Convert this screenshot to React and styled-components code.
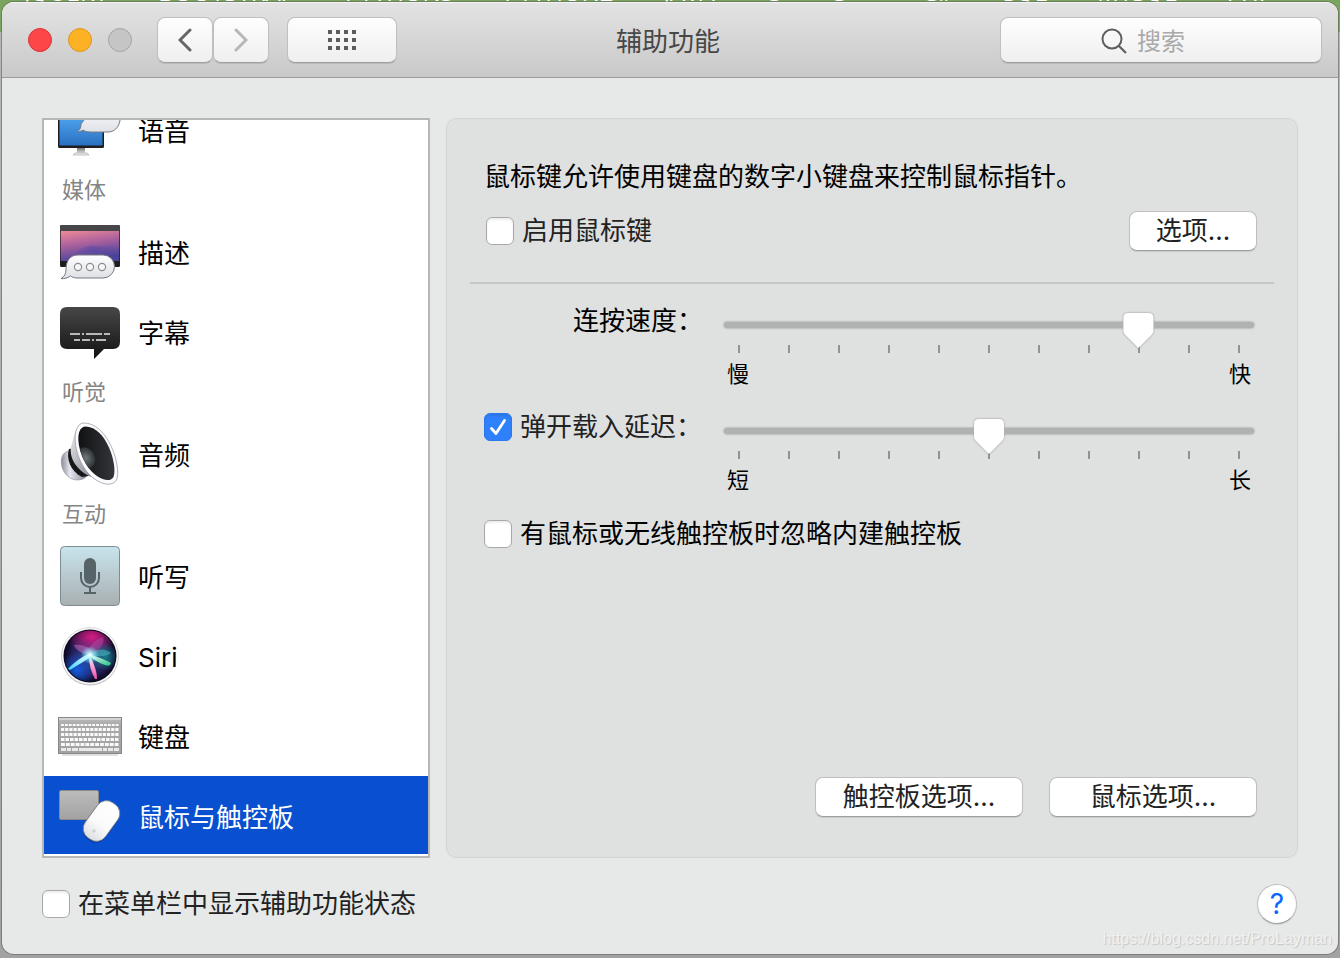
import React, { useState } from "react";
import styled, { createGlobalStyle, css } from "styled-components";

const GlobalStyle = createGlobalStyle`
  *, *::before, *::after { box-sizing: border-box; }
  body {
    margin: 0;
    font-family: Inter, "Noto Sans CJK SC", sans-serif;
    font-size: 26px;
    line-height: 32px;
    color: #000;
  }
  button, input { font: inherit; color: inherit; margin: 0; }
  ul { list-style: none; margin: 0; padding: 0; }
  p, h1, h2 { margin: 0; font: inherit; }
`;

const Desktop = styled.div`
  position: relative;
  min-height: 100vh;
  padding: 2px 2px 4px;
  display: flex;
  background: linear-gradient(#7ba45c 32px, #b5b5b5 32px, #a2a2a2);
`;

const Backdrop = styled.div`
  position: absolute;
  inset: 0 0 auto 0;
  height: 8px;
  overflow: hidden;
  display: flex;
  align-items: flex-end;
  gap: 50px;
  padding: 0 0 0 24px;
  color: #fff;
  font-family: "Open Sans", sans-serif;
  font-size: 24px;
  line-height: 32px;
  white-space: nowrap;
`;

const Window = styled.div`
  position: relative;
  flex: 1;
  min-width: 0;
  display: flex;
  flex-direction: column;
  border-radius: 12px;
  overflow: hidden;
  background: #e7e9e8;
  box-shadow: 0 0 0 1px rgba(90, 90, 90, 0.5);
`;

const TitleBar = styled.header`
  display: grid;
  grid-template-columns: 1fr auto 1fr;
  align-items: center;
  height: 76px;
  padding: 0 16px;
  border-bottom: 1px solid #9b9b9b;
  background: linear-gradient(#e3e3e3, #c9c9c9);
  box-shadow: inset 0 1px #f3f3f3;
`;

const ToolGroup = styled.div`
  display: flex;
  align-items: center;
  gap: 18px;
  padding-left: 10px;
`;

const Lights = styled.div`
  display: flex;
  gap: 16px;
  padding-right: 7px;
`;

const Light = styled.button`
  width: 24px;
  height: 24px;
  padding: 0;
  border-radius: 50%;
  border: 1px solid ${(p) => p.$edge};
  background: ${(p) => p.$fill};
`;

const raised = css`
  border: 1px solid #c0c0c0;
  border-bottom-color: #9f9f9f;
  border-radius: 8px;
  box-shadow: 0 1px 1px rgba(0, 0, 0, 0.1);
`;

const NavPair = styled.div`
  display: flex;
`;

const ToolButton = styled.button`
  ${raised}
  display: flex;
  align-items: center;
  justify-content: center;
  width: ${(p) => (p.$wide ? 110 : 56)}px;
  height: 46px;
  padding: 0;
  background: linear-gradient(#fefefe, #efefef);
`;

const Title = styled.h1`
  padding: 5px 4px 0 0;
  color: #474747;
`;

const SearchBox = styled.label`
  ${raised}
  justify-self: end;
  display: flex;
  align-items: center;
  gap: 10px;
  width: 322px;
  height: 46px;
  padding: 2px 8px 0 100px;
  background: linear-gradient(#fefefe, #efefef);
`;

const SearchInput = styled.input`
  flex: 1;
  min-width: 0;
  padding: 2px 0 0;
  border: 0;
  outline: 0;
  background: none;
  font-size: 24px;
  &::placeholder { color: #a9a9a9; opacity: 1; }
`;

const Content = styled.main`
  flex: 1;
  display: flex;
  gap: 16px;
  padding: 40px 40px 0;
`;

const Sidebar = styled.nav`
  display: flex;
  flex: 0 0 388px;
  border: 2px solid #b6b8b7;
  background: #fff;
`;

const ListScroller = styled.div`
  flex: 1;
  contain: size;
  display: flex;
  flex-direction: column-reverse;
  overflow-y: auto;
  scrollbar-width: none;
`;

const GroupTitle = styled.h2`
  padding: 0 18px;
  font-size: 22px;
  line-height: 40px;
  height: 42px;
  color: #858585;
`;

const ItemButton = styled.button`
  display: flex;
  align-items: center;
  gap: 16px;
  width: 100%;
  height: 80px;
  padding: 2px 14px 0;
  border: 0;
  border-bottom: 2px solid #fff;
  text-align: left;
  background: ${(p) => (p.$selected ? "#0850d0" : "#fff")};
  color: ${(p) => (p.$selected ? "#fff" : "#000")};
  svg { flex: none; overflow: visible; }
`;

const ItemName = styled.span`
  padding-top: 4px;
`;

const Panel = styled.section`
  flex: 1;
  min-width: 0;
  display: flex;
  flex-direction: column;
  padding: 42px 23px 40px;
  border: 1px solid #d2d4d3;
  border-radius: 10px;
  background: #dfe1e0;
`;

const Description = styled.p`
  padding: 0 14px;
`;

const EnableRow = styled.div`
  display: flex;
  align-items: center;
  justify-content: space-between;
  padding: 0 17px 0 16px;
  margin-top: 18px;
`;

const Divider = styled.hr`
  width: 100%;
  height: 2px;
  margin: 31px 0 21px;
  border: 0;
  background: #c6c8c7;
`;

const CheckLabel = styled.label`
  display: flex;
  align-items: center;
  gap: 8px;
  color: ${(p) => (p.$strong ? "#000" : "#222")};
`;

const CheckWrap = styled.span`
  display: grid;
  place-items: center;
  svg, input { grid-area: 1 / 1; }
  svg { pointer-events: none; z-index: 1; }
`;

const CheckInput = styled.input`
  appearance: none;
  width: 28px;
  height: 28px;
  border: 1px solid #a9a9a9;
  border-radius: 6px;
  background: #fff;
  box-shadow: inset 0 2px 2px rgba(0, 0, 0, 0.07);
  &:checked {
    border-color: #2878f0;
    background: #2f80fb;
  }
`;

const SliderGrid = styled.div`
  display: grid;
  grid-template-columns: 219px 1fr;
  gap: 23px 21px;
  align-items: start;
  padding: 0 20px 0 14px;
`;

const SliderLabel = styled.label`
  justify-self: end;
`;

const SliderBlock = styled.div`
  padding-top: 8px;
`;

const Range = styled.input`
  appearance: none;
  display: block;
  position: relative;
  width: 100%;
  height: 24px;
  background: none;
  filter: drop-shadow(0 0 1px rgba(0, 0, 0, 0.35));
  &::-webkit-slider-runnable-track {
    height: 6px;
    border-radius: 3px;
    background: #b0b2b1;
  }
  &::-webkit-slider-thumb {
    appearance: none;
    width: 32px;
    height: 36px;
    margin-top: -9px;
    background: #fff;
    clip-path: path("M6 0H26Q31 0 31 5V18Q31 20 29 22L16 35L3 22Q1 20 1 18V5Q1 0 6 0Z");
  }
`;

const Ticks = styled.div`
  display: flex;
  justify-content: space-between;
  padding: 0 14px;
  margin-top: 8px;
`;

const Tick = styled.span`
  width: 2px;
  height: 8px;
  background: #929493;
`;

const Ends = styled.div`
  display: flex;
  justify-content: space-between;
  padding: 0 3px;
  margin-top: 7px;
  font-size: 22px;
  line-height: 28px;
`;

const IgnoreRow = styled.div`
  display: flex;
  padding: 0 14px;
  margin-top: 24px;
`;

const Actions = styled.div`
  display: flex;
  justify-content: flex-end;
  gap: 26px;
  margin-top: auto;
  padding: 24px 17px 0;
`;

const PushButton = styled.button`
  ${raised}
  width: ${(p) => (p.$wide ? 208 : 128)}px;
  height: 40px;
  padding: 0;
  line-height: 36px;
  background: #fff;
  color: #222;
`;

const Footer = styled.footer`
  display: flex;
  align-items: center;
  justify-content: space-between;
  height: 96px;
  padding: 0 41px 5px 40px;
`;

const HelpButton = styled.button`
  ${raised}
  width: 40px;
  height: 40px;
  padding: 0;
  border-radius: 50%;
  background: #fff;
  color: #0a66ff;
  font-size: 28px;
`;

const Watermark = styled.span`
  position: absolute;
  right: 6px;
  bottom: 5px;
  font: 16px/20px "Liberation Sans", sans-serif;
  color: #f1f1f1;
  text-shadow: 1px 1px 1px #c4c4c4;
`;

const Icon = ({ children }) => (
  <svg width="64" height="64" viewBox="0 0 64 64" aria-hidden="true">{children}</svg>
);

const SpeechIcon = () => (
  <Icon>
    <defs>
      <linearGradient id="spScreen" x2="0" y2="1"><stop stopColor="#56aef5" /><stop offset="1" stopColor="#2a70c2" /></linearGradient>
      <linearGradient id="spBubble" x2="0" y2="1"><stop stopColor="#fff" /><stop offset="1" stopColor="#dfe2e8" /></linearGradient>
      <linearGradient id="spStand" x2="0" y2="1"><stop stopColor="#777" /><stop offset="1" stopColor="#ddd" /></linearGradient>
    </defs>
    <path d="M19 50h8v5h-8z" fill="url(#spStand)" />
    <path d="M17 55h12l2 2H15z" fill="#eee" stroke="#aaa" strokeWidth=".7" />
    <rect y="12" width="46" height="38" rx="1.5" fill="#1e1e1e" />
    <rect x="1.5" y="13" width="43" height="34.5" fill="url(#spScreen)" />
    <path d="M38 6h14c14 0 14 28-2 28H33c-4 0-7-1-8-2-2 1-4 2-6 2 3-2 4-4 4-8z" fill="url(#spBubble)" stroke="#777b82" strokeWidth="1" />
  </Icon>
);

const DescribeIcon = () => (
  <Icon>
    <defs>
      <linearGradient id="dsSky" x1="0" y1="0" x2=".3" y2="1"><stop stopColor="#f08a98" /><stop offset=".45" stopColor="#b0639d" /><stop offset="1" stopColor="#49439b" /></linearGradient>
      <radialGradient id="dsHaze"><stop stopColor="#5547a3" stopOpacity=".7" /><stop offset="1" stopColor="#5547a3" stopOpacity="0" /></radialGradient>
      <linearGradient id="dsBubble" x2="0" y2="1"><stop stopColor="#fff" /><stop offset="1" stopColor="#dcdfe4" /></linearGradient>
    </defs>
    <rect x="2" y="5" width="60" height="42" rx="1.5" fill="#1d1d1f" />
    <rect x="2" y="5" width="60" height="6" rx="1.5" fill="#464648" />
    <rect x="2.7" y="11" width="58.6" height="30" fill="url(#dsSky)" />
    <path d="M12 41Q20 24 38 26T61.3 20V41z" fill="url(#dsHaze)" />
    <path d="M20 35h25a11.500 11.500 0 0 1 0 23H19c-3 0-5-1-6.500-2-3 2-6 3-9.500 2.600 3.500-2 5-4.600 5-9.600 0-8 4-14 12-14z" fill="url(#dsBubble)" stroke="#777a80" strokeWidth="1" />
    {[20, 32, 44].map((x) => <circle key={x} cx={x} cy="47" r="3.600" fill="#f6f6f6" stroke="#8b8f94" strokeWidth="1.200" />)}
  </Icon>
);

const CaptionIcon = () => (
  <Icon>
    <defs>
      <linearGradient id="cpBox" x2="0" y2="1"><stop stopColor="#474747" /><stop offset="1" stopColor="#121212" /></linearGradient>
    </defs>
    <path d="M9 7H55Q62 7 62 14V42Q62 49 55 49H46L36 59V49H9Q2 49 2 42V14Q2 7 9 7Z" fill="url(#cpBox)" />
    <path d="M12 34h10m2 0h2m2 0h16m2 0h6M16 40h6m2 0h8m2 0h2m2 0h10" stroke="#b9b9b9" strokeWidth="2" />
  </Icon>
);

const SpeakerIcon = () => (
  <Icon>
    <defs>
      <linearGradient id="akCone" x1="0" y1="0" x2="1" y2="1"><stop stopColor="#f3f3f8" /><stop offset=".5" stopColor="#a9a9b5" /><stop offset="1" stopColor="#55555f" /></linearGradient>
      <linearGradient id="akBack" x2="1"><stop stopColor="#8c8c98" /><stop offset=".35" stopColor="#e8e8f2" /><stop offset="1" stopColor="#8a8a96" /></linearGradient>
      <radialGradient id="akDome"><stop stopColor="#70777b" /><stop offset="1" stopColor="#2c3033" /></radialGradient>
      <linearGradient id="akIn" x2="1"><stop stopColor="#101113" /><stop offset="1" stopColor="#33363a" /></linearGradient>
      <clipPath id="akClip"><path d="M26 4.500C17 6 19 27 28 42S53 62 56.500 55S52 6 26 4.500z" /></clipPath>
    </defs>
    <path d="M10 29C4 31 2 37 4 45c2 7 8 13 15 13 4 0 7-1 9-3L14 28z" fill="url(#akBack)" stroke="#8f8f99" strokeWidth=".6" />
    <path d="M11 27c-3 9 1 22 13 28l7-1L16 26z" fill="#17171a" />
    <path d="M25 1C15 8 16 16 13 25c-2 11 6 23 18 29l18 7 6-6L29 4z" fill="url(#akCone)" />
    <path d="M25 1C14 3 15 27 25 44S53 67 58.500 58C64 45 50 0 25 1z" fill="#fbfbfd" stroke="#9d9da4" strokeWidth=".8" />
    <path d="M27 4.500C17 6 19 27 28 42S52 62 55.500 55C60 43 48 4 27 4.500z" fill="url(#akIn)" />
    <g clipPath="url(#akClip)"><ellipse cx="28" cy="36" rx="9" ry="11" fill="url(#akDome)" transform="rotate(-27 28 36)" /></g>
  </Icon>
);

const DictationIcon = () => (
  <Icon>
    <defs>
      <linearGradient id="dcBox" x2="0" y2="1"><stop stopColor="#c8e4ec" /><stop offset="1" stopColor="#a9afb1" /></linearGradient>
    </defs>
    <rect x="2.500" y="2.500" width="59" height="59" rx="4" fill="url(#dcBox)" stroke="#7c8c93" />
    <rect x="26" y="14" width="12" height="26" rx="6" fill="#566467" />
    <path d="M23 28v6a9 9 0 0 0 18 0v-6M32 43v6M26 49h12" fill="none" stroke="#566467" strokeWidth="2" />
  </Icon>
);

const SiriIcon = () => (
  <Icon>
    <defs>
      <radialGradient id="srBase"><stop stopColor="#37549c" /><stop offset=".7" stopColor="#221d56" /><stop offset="1" stopColor="#0a0720" /></radialGradient>
      <radialGradient id="srPink"><stop stopColor="#d81b84" /><stop offset="1" stopColor="#d81b84" stopOpacity="0" /></radialGradient>
      <radialGradient id="srBlue"><stop stopColor="#145be0" /><stop offset="1" stopColor="#145be0" stopOpacity="0" /></radialGradient>
      <radialGradient id="srTeal"><stop stopColor="#157b88" /><stop offset="1" stopColor="#157b88" stopOpacity="0" /></radialGradient>
      <radialGradient id="srGlow"><stop stopColor="#fff" /><stop offset=".3" stopColor="#b9fbff" stopOpacity=".8" /><stop offset="1" stopColor="#7ff" stopOpacity="0" /></radialGradient>
      <linearGradient id="srLeft" x1="1" y1="0" x2="0" y2="1"><stop stopColor="#fff" /><stop offset="1" stopColor="#35d5ff" /></linearGradient>
      <linearGradient id="srRight" x2="1" y2="1"><stop stopColor="#fff" /><stop offset="1" stopColor="#22c184" /></linearGradient>
      <linearGradient id="srDown" x2="0" y2="1"><stop stopColor="#fff" /><stop offset="1" stopColor="#f04aa8" /></linearGradient>
      <clipPath id="srClip"><circle cx="32" cy="32" r="25.500" /></clipPath>
    </defs>
    <circle cx="32" cy="33" r="28.500" fill="#000" opacity=".25" />
    <circle cx="32" cy="32" r="28.500" fill="#f7f7f7" stroke="#cfcfcf" strokeWidth=".7" />
    <circle cx="32" cy="32" r="26.500" fill="#0b0820" />
    <g clipPath="url(#srClip)">
      <circle cx="32" cy="32" r="26" fill="url(#srBase)" />
      <ellipse cx="34" cy="13" rx="25" ry="18" fill="url(#srPink)" />
      <circle cx="19" cy="46" r="18" fill="url(#srBlue)" />
      <circle cx="47" cy="33" r="14" fill="url(#srTeal)" />
      <path d="M32 32C24 30 17 25 16 21c9-1 22 4 16 11z" fill="#e084d8" opacity=".4" />
      <path d="M32 31c-4-8 5-15 13-18 3 6-4 14-13 18z" fill="#c455b4" opacity=".4" />
      <path d="M32 31c7-8 16-6 21-2-5 4-13 4-21 2z" fill="#62dcdc" opacity=".4" />
      <path d="M33 29C25 32 16 38 10 45l2 1c8-5 16-10 22-14z" fill="url(#srLeft)" />
      <path d="M31 30c6 2 15 5 22 9-1 3-3 3-6 2-6-2-12-6-16-9z" fill="url(#srRight)" />
      <path d="M31 30c4 8 8 16 8 25l-2 0c-4-7-6-15-6-23z" fill="url(#srDown)" />
      <circle cx="32" cy="31" r="9" fill="url(#srGlow)" />
    </g>
  </Icon>
);

const keyRows = [
  [20, 2, 15], [24, 3, 14], [29, 3, 14], [34, 3, 13], [39, 3, 12],
];

const KeyboardIcon = () => (
  <Icon>
    <defs>
      <linearGradient id="kbBody" x2="0" y2="1"><stop stopColor="#bdbdbd" /><stop offset=".2" stopColor="#a9a9a9" /><stop offset="1" stopColor="#a2a2a2" /></linearGradient>
    </defs>
    <rect x="4" y="49" width="56" height="3" rx="1" fill="#000" opacity=".12" />
    <rect x=".5" y="13.500" width="63" height="36" fill="url(#kbBody)" stroke="#868686" />
    <path d="M1 15h62" stroke="#dedede" strokeWidth="1.500" />
    {keyRows.map(([y, h, n]) =>
      Array.from({ length: n }, (_, i) => (
        <rect key={`${y}-${i}`} x={3 + (i * 58.5) / n} y={y} width={58.5 / n - 1} height={h} fill="#fafafa" />
      ))
    )}
    {[[3, 5], [9, 4], [14, 6], [21, 23], [45, 4], [50, 5], [56, 5]].map(([x, w]) => (
      <rect key={x} x={x} y="44" width={w} height="3" fill="#e9e9e9" />
    ))}
  </Icon>
);

const MouseIcon = () => (
  <Icon>
    <defs>
      <linearGradient id="msPad" x2="0" y2="1"><stop stopColor="#bcbcbc" /><stop offset="1" stopColor="#a2a2a2" /></linearGradient>
      <linearGradient id="msBody" x2="0" y2="1"><stop stopColor="#fff" /><stop offset=".6" stopColor="#fafafa" /><stop offset="1" stopColor="#dcdfe2" /></linearGradient>
    </defs>
    <rect x="1.500" y="6.500" width="39" height="29" rx="1.500" fill="url(#msPad)" stroke="#8a8a8a" />
    <rect x="31" y="17" width="25" height="43" rx="11" transform="rotate(36 43.500 38)" fill="#001a60" opacity=".4" />
    <rect x="31" y="15.500" width="25" height="43" rx="11" transform="rotate(36 43.500 37)" fill="url(#msBody)" stroke="#6f7684" strokeWidth=".8" />
    <circle cx="36" cy="47" r="1.800" fill="#cfd1d3" />
  </Icon>
);

const entries = [
  { name: "语音", Art: SpeechIcon },
  { group: "媒体" },
  { name: "描述", Art: DescribeIcon },
  { name: "字幕", Art: CaptionIcon },
  { group: "听觉" },
  { name: "音频", Art: SpeakerIcon },
  { group: "互动" },
  { name: "听写", Art: DictationIcon },
  { name: "Siri", Art: SiriIcon },
  { name: "键盘", Art: KeyboardIcon },
  { name: "鼠标与触控板", Art: MouseIcon },
];

const backdropWords = ["JQUERY", "BOOTSTRAP", "PYTHON3", "PYTHON2", "JAVA", "C", "C++", "C#", "SQL", "MYSQL", "PHP"];

function Checkbox({ id, defaultChecked = false, strong, children }) {
  const [on, setOn] = useState(defaultChecked);
  return (
    <CheckLabel htmlFor={id} $strong={strong}>
      <CheckWrap>
        <CheckInput id={id} type="checkbox" checked={on} onChange={(e) => setOn(e.target.checked)} />
        {on && (
          <svg width="28" height="28" viewBox="0 0 28 28" aria-hidden="true">
            <path d="M7.500 15.500L12 20.500L20.500 7.500" fill="none" stroke="#fff" strokeWidth="2.800" strokeLinecap="round" strokeLinejoin="round" />
          </svg>
        )}
      </CheckWrap>
      <span>{children}</span>
    </CheckLabel>
  );
}

function Slider({ id, label, value, low, high }) {
  return (
    <SliderBlock>
      <Range id={id} aria-label={label} type="range" min="0" max="10" defaultValue={value} />
      <Ticks>{Array.from({ length: 11 }, (_, i) => <Tick key={i} />)}</Ticks>
      <Ends><span>{low}</span><span>{high}</span></Ends>
    </SliderBlock>
  );
}

export default function App() {
  const [selected, setSelected] = useState("鼠标与触控板");
  return (
    <>
      <GlobalStyle />
      <Desktop>
        <Backdrop aria-hidden="true">
          {backdropWords.map((word) => <span key={word}>{word}</span>)}
        </Backdrop>
        <Window>
          <TitleBar>
            <ToolGroup>
              <Lights>
                <Light aria-label="关闭" $fill="#fc4648" $edge="#dc3436" />
                <Light aria-label="最小化" $fill="#fdb225" $edge="#dc9422" />
                <Light aria-label="缩放" $fill="#c5c5c5" $edge="#a4a4a4" />
              </Lights>
              <NavPair>
                <ToolButton aria-label="后退">
                  <svg width="14" height="24" viewBox="0 0 14 24"><path d="M12 2L2 12L12 22" fill="none" stroke="#666" strokeWidth="3" strokeLinecap="round" /></svg>
                </ToolButton>
                <ToolButton aria-label="前进">
                  <svg width="14" height="24" viewBox="0 0 14 24"><path d="M2 2L12 12L2 22" fill="none" stroke="#b7b7b7" strokeWidth="3" strokeLinecap="round" /></svg>
                </ToolButton>
              </NavPair>
              <ToolButton $wide aria-label="显示全部">
                <svg width="28" height="20" viewBox="0 0 28 20" fill="#5c5c5c">
                  {[0, 8, 16].map((y) => [0, 8, 16, 24].map((x) => <rect key={`${x}-${y}`} x={x} y={y} width="4" height="4" />))}
                </svg>
              </ToolButton>
            </ToolGroup>
            <Title>辅助功能</Title>
            <SearchBox>
              <svg width="26" height="26" viewBox="0 0 26 26" aria-hidden="true"><circle cx="11" cy="11" r="9.500" fill="none" stroke="#5e5e5e" strokeWidth="2" /><path d="M17.500 17.500L25 25" stroke="#5e5e5e" strokeWidth="2.200" /></svg>
              <SearchInput type="search" placeholder="搜索" aria-label="搜索" />
            </SearchBox>
          </TitleBar>
          <Content>
            <Sidebar>
              <ListScroller>
                <ul>
                  {entries.map(({ name, group, Art }) =>
                    group ? (
                      <li key={group}><GroupTitle>{group}</GroupTitle></li>
                    ) : (
                      <li key={name}>
                        <ItemButton $selected={name === selected} onClick={() => setSelected(name)}>
                          <Art />
                          <ItemName>{name}</ItemName>
                        </ItemButton>
                      </li>
                    )
                  )}
                </ul>
              </ListScroller>
            </Sidebar>
            <Panel>
              <Description>鼠标键允许使用键盘的数字小键盘来控制鼠标指针。</Description>
              <EnableRow>
                <Checkbox id="mouse-keys">启用鼠标键</Checkbox>
                <PushButton>选项...</PushButton>
              </EnableRow>
              <Divider />
              <SliderGrid>
                <SliderLabel htmlFor="double-click">连按速度：</SliderLabel>
                <Slider id="double-click" label="连按速度" value={8} low="慢" high="快" />
                <Checkbox id="spring-loading" defaultChecked>弹开载入延迟：</Checkbox>
                <Slider id="spring-delay" label="弹开载入延迟" value={5} low="短" high="长" />
              </SliderGrid>
              <IgnoreRow>
                <Checkbox id="ignore-trackpad" strong>有鼠标或无线触控板时忽略内建触控板</Checkbox>
              </IgnoreRow>
              <Actions>
                <PushButton $wide>触控板选项...</PushButton>
                <PushButton $wide>鼠标选项...</PushButton>
              </Actions>
            </Panel>
          </Content>
          <Footer>
            <Checkbox id="menu-status">在菜单栏中显示辅助功能状态</Checkbox>
            <HelpButton aria-label="帮助">?</HelpButton>
          </Footer>
          <Watermark>https://blog.csdn.net/ProLayman</Watermark>
        </Window>
      </Desktop>
    </>
  );
}
